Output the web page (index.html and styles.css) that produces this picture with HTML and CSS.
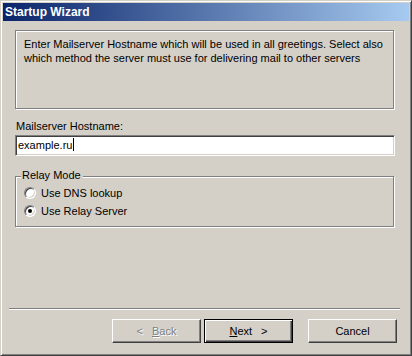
FILE: index.html
```html
<!DOCTYPE html>
<html lang="en">
<head>
  <meta charset="UTF-8" />
  <title>Startup Wizard</title>
  <link rel="stylesheet" href="styles.css">
</head>
<body>
  <div class="window">
    <div class="titlebar">Startup Wizard</div>

    <div class="content">
      <div class="info">
        Enter Mailserver Hostname which will be used in all greetings. Select also
        which method the server must use for delivering mail to other servers
      </div>

      <div class="field-label">Mailserver Hostname:</div>
      <div class="textbox"><span class="value">example.ru</span><span class="caret"></span></div>

      <div class="groupbox">
        <span class="legend">Relay Mode</span>
        <div class="radio-row">
          <span class="radio"></span>
          <span>Use DNS lookup</span>
        </div>
        <div class="radio-row">
          <span class="radio checked"></span>
          <span>Use Relay Server</span>
        </div>
      </div>
    </div>

    <div class="separator"></div>

    <div class="buttons">
      <button class="btn" disabled><span class="arrow">&lt;</span><u>B</u>ack</button>
      <button class="btn default"><u>N</u>ext<span class="arrow right">&gt;</span></button>
      <button class="btn cancel">Cancel</button>
    </div>
  </div>
</body>
</html>
```

FILE: styles.css
```css
html, body {
  margin: 0;
  padding: 0;
  background-color: #d4d0c8;
}
body {
  font-family: "Liberation Sans", Arial, sans-serif;
  font-size: 11px;
  color: #000;
}
.window {
  box-sizing: border-box;
  width: 412px;
  height: 356px;
  padding: 2px;
  background-color: #d4d0c8;
  border: 1px solid;
  border-color: #d4d0c8 #404040 #404040 #d4d0c8;
  box-shadow: inset 1px 1px #fff, inset -1px -1px #808080;
}
.titlebar {
  height: 18px;
  line-height: 18px;
  padding-left: 2px;
  color: #fff;
  font-weight: bold;
  font-size: 12px;
  background: linear-gradient(to right, #0a246a, #a6caf0);
}
.content {
  padding-left: 12px;
}
.info {
  box-sizing: border-box;
  width: 379px;
  height: 79px;
  margin-top: 9px;
  padding: 6px 8px;
  line-height: 14px;
  border: 1px solid #808080;
  box-shadow: inset 1px 1px #fff, 1px 1px #fff;
}
.field-label {
  margin-top: 11px;
  padding-left: 1px;
  line-height: 13px;
}
.textbox {
  box-sizing: border-box;
  width: 380px;
  height: 21px;
  margin-top: 2px;
  padding-left: 2px;
  line-height: 19px;
  background-color: #fff;
  border: 1px solid;
  border-color: #808080 #fff #fff #808080;
  box-shadow: inset 1px 1px #404040, inset -1px -1px #d4d0c8;
}
.caret {
  display: inline-block;
  width: 1px;
  height: 13px;
  margin-left: 1px;
  vertical-align: -2px;
  background-color: #000;
}
.groupbox {
  position: relative;
  box-sizing: border-box;
  width: 379px;
  height: 51px;
  margin-top: 20px;
  padding: 7px 8px 6px;
  border: 1px solid #808080;
  box-shadow: inset 1px 1px #fff, 1px 1px #fff;
}
.legend {
  position: absolute;
  left: 5px;
  top: -8px;
  padding: 0 2px 0 1px;
  line-height: 13px;
  background-color: #d4d0c8;
}
.radio-row {
  display: flex;
  align-items: center;
  gap: 5px;
  height: 18px;
}
.radio {
  position: relative;
  box-sizing: border-box;
  width: 12px;
  height: 12px;
  border-radius: 50%;
  background-color: #fff;
  border: 1px solid;
  border-color: #808080 #fff #fff #808080;
  box-shadow: inset 1px 1px #404040, inset -1px -1px #d4d0c8;
}
.radio.checked::after {
  content: "";
  position: absolute;
  left: 3px;
  top: 3px;
  width: 4px;
  height: 4px;
  border-radius: 50%;
  background-color: #000;
}
.separator {
  width: 391px;
  margin: 81px 0 0 6px;
  border-top: 1px solid #808080;
  border-bottom: 1px solid #fff;
}
.buttons {
  display: flex;
  justify-content: flex-end;
  padding-right: 12px;
  margin-top: 9px;
}
.btn {
  box-sizing: border-box;
  width: 89px;
  height: 24px;
  padding: 0;
  font: inherit;
  color: #000;
  background-color: #d4d0c8;
  border: 1px solid;
  border-color: #fff #404040 #404040 #fff;
  box-shadow: inset -1px -1px #808080;
}
.btn + .btn {
  margin-left: 3px;
}
.btn.cancel {
  margin-left: 15px;
}
.btn:disabled {
  color: #808080;
  text-shadow: 1px 1px #fff;
}
.btn.default {
  border: 1px solid #000;
  box-shadow: inset 1px 1px #fff, inset -1px -1px #404040, inset -2px -2px #808080;
}
.arrow {
  margin-right: 9px;
}
.arrow.right {
  margin: 0 0 0 9px;
}
```
